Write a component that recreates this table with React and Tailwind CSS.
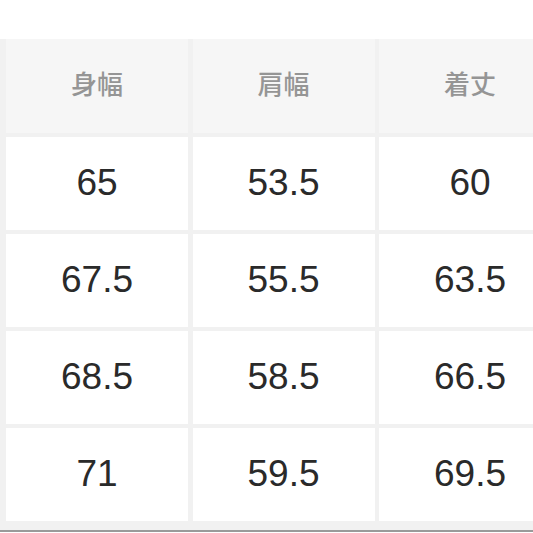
export default function App() {
  const header = ["身幅", "肩幅", "着丈"];
  const rows = [
    ["65", "53.5", "60"],
    ["67.5", "55.5", "63.5"],
    ["68.5", "58.5", "66.5"],
    ["71", "59.5", "69.5"],
  ];
  return (
    <div className="w-[533px] h-[533px] overflow-hidden bg-white relative">
      <div className="h-[39px] bg-white" />
      <div className="bg-[#f1f1f1] pl-[6px] pb-[9px] w-[600px]">
        <div className="grid grid-cols-[182px_182px_182px] gap-x-[4.5px] gap-y-[4px]">
          {header.map((h) => (
            <div
              key={h}
              className="h-[94px] bg-[#f6f6f6] flex items-center justify-center pb-[7px] text-[26px] font-medium text-[#959595]"
              style={{ fontFamily: '"Noto Sans CJK JP", "Noto Sans", sans-serif' }}
            >
              {h}
            </div>
          ))}
          {rows.flat().map((v, i) => (
            <div
              key={i}
              className="h-[93px] bg-white flex items-center justify-center pb-[2px] text-[37px] text-[#2a2a2a]"
              style={{ fontFamily: '"Liberation Sans", Arial, sans-serif' }}
            >
              {v}
            </div>
          ))}
        </div>
      </div>
      <div className="h-[2px] bg-[#9a9a9a]" />
    </div>
  );
}
